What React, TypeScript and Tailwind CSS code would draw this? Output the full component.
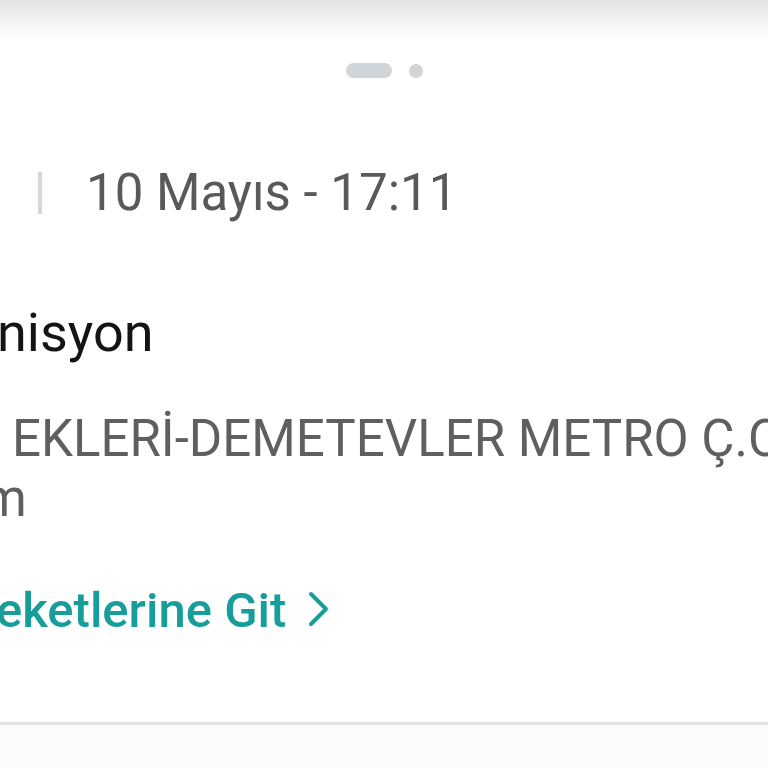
import React from "react";

export default function App() {
  return (
    <div
      className="relative w-[768px] h-[768px] overflow-hidden bg-white"
      style={{ fontFamily: "Roboto, 'Noto Sans', sans-serif" }}
    >
      <div className="h-[40px] w-full bg-gradient-to-b from-[#e4e4e4] to-white" />
      <div className="mt-[23px] flex h-[15px] items-center justify-center gap-[17px] pl-[1px]">
        <div className="h-[15px] w-[46px] rounded-full bg-[#cfd5d8]" />
        <div className="h-[14px] w-[14px] rounded-full bg-[#cfd5d8]" />
      </div>

      <div className="mt-[89px] flex h-[51px] items-center">
        <div className="ml-[38px] h-[42px] w-[4px] bg-[#d6d6d6]" />
        <div className="ml-[44px] whitespace-nowrap text-[51px] leading-none text-[#595959]">
          10 Mayıs - 17:11
        </div>
      </div>

      <div className="mt-[87px] h-[56px] whitespace-nowrap text-[54px] leading-none text-[#141414] -ml-[3px] pt-[1px]">
        nisyon
      </div>

      <div className="mt-[48px] h-[120px] text-[51px] leading-[60px] text-[#5f5f5f]">
        <div className="ml-[12px] whitespace-nowrap">EKLERİ-DEMETEVLER METRO Ç.C</div>
        <div className="-ml-[18px] whitespace-nowrap">m</div>
      </div>

      <div className="mt-[57px] flex h-[49px] items-center gap-[20px] -ml-[4px]">
        <span className="whitespace-nowrap text-[49px] font-medium leading-none text-[#179e9b]">
          eketlerine Git
        </span>
        <svg width="26" height="36" viewBox="0 0 26 36" fill="none" className="mt-[-4px]">
          <path d="M5 3 L20 18 L5 33" stroke="#179e9b" strokeWidth="4" strokeLinecap="round" strokeLinejoin="round" />
        </svg>
      </div>

      <div className="mt-[87px] h-[3px] w-full bg-[#e2e2e2]" />
      <div className="h-[60px] w-full bg-[#fbfbfb]" />
    </div>
  );
}
